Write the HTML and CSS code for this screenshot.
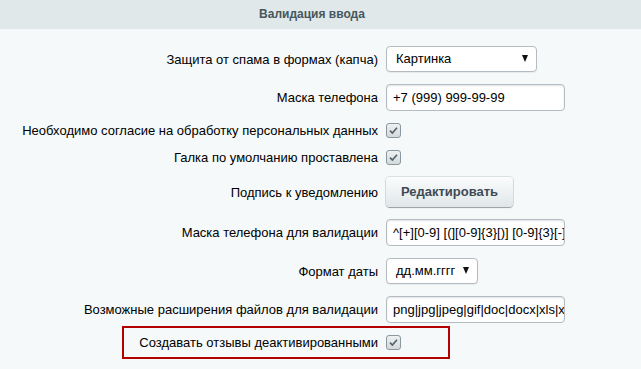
FILE: index.html
```html
<!DOCTYPE html>
<html lang="ru">
<head>
<meta charset="utf-8">
<link rel="stylesheet" href="styles.css">
</head>
<body>
<div class="heading">Валидация ввода</div>
<div class="form">
  <div class="row">
    <div class="label">Защита от спама в формах (капча)</div>
    <div class="ctrl"><div class="select sel-wide"><span>Картинка</span><span class="arrow"></span></div></div>
  </div>
  <div class="row">
    <div class="label">Маска телефона</div>
    <div class="ctrl"><div class="field">+7 (999) 999-99-99</div></div>
  </div>
  <div class="row">
    <div class="label">Необходимо согласие на обработку персональных данных</div>
    <div class="ctrl"><span class="check"><svg width="15" height="15" viewBox="0 0 15 15"><path d="M4 7.6 L6.4 10 L11 4.8" fill="none" stroke="#55606a" stroke-width="1.6"/></svg></span></div>
  </div>
  <div class="row">
    <div class="label">Галка по умолчанию проставлена</div>
    <div class="ctrl"><span class="check"><svg width="15" height="15" viewBox="0 0 15 15"><path d="M4 7.6 L6.4 10 L11 4.8" fill="none" stroke="#55606a" stroke-width="1.6"/></svg></span></div>
  </div>
  <div class="row">
    <div class="label">Подпись к уведомлению</div>
    <div class="ctrl"><span class="btn">Редактировать</span></div>
  </div>
  <div class="row">
    <div class="label">Маска телефона для валидации</div>
    <div class="ctrl"><div class="field">^[+][0-9] [(][0-9]{3}[)] [0-9]{3}[-][0-9]{2}[-][0-9]{2}$</div></div>
  </div>
  <div class="row">
    <div class="label">Формат даты</div>
    <div class="ctrl"><div class="select sel-date"><span>дд.мм.гггг</span><span class="arrow"></span></div></div>
  </div>
  <div class="row">
    <div class="label">Возможные расширения файлов для валидации</div>
    <div class="ctrl"><div class="field">png|jpg|jpeg|gif|doc|docx|xls|xlsx|txt|pdf|odt|rtf</div></div>
  </div>
  <div class="row marked">
    <div class="label">Создавать отзывы деактивированными</div>
    <div class="ctrl"><span class="check"><svg width="15" height="15" viewBox="0 0 15 15"><path d="M4 7.6 L6.4 10 L11 4.8" fill="none" stroke="#55606a" stroke-width="1.6"/></svg></span></div>
    <span class="highlight"></span>
  </div>
</div>
</body>
</html>
```
FILE: styles.css
```css
html, body {
  margin: 0;
  padding: 0;
}
body {
  background: #f5f9f9;
  font-family: Arial, "Liberation Sans", sans-serif;
  font-size: 13px;
  color: #000;
  width: 641px;
  height: 369px;
  overflow: hidden;
}
.heading {
  height: 29px;
  line-height: 28px;
  background: #e0e8ea;
  color: #46575d;
  font-weight: bold;
  font-size: 12px;
  text-align: center;
  padding-right: 17px;
}
.form {
  padding-top: 11px;
}
.row {
  display: grid;
  grid-template-columns: 378px 1fr;
  column-gap: 8px;
  align-items: center;
  padding: 6px 0;
  line-height: 15px;
}
.label {
  text-align: right;
  white-space: nowrap;
}
.ctrl {
  display: flex;
  align-items: center;
}
.field {
  box-sizing: border-box;
  width: 179px;
  height: 27px;
  line-height: 25px;
  padding: 0 6px;
  background: #fff;
  border: 1px solid #b4bcc1;
  border-radius: 4px;
  white-space: nowrap;
  overflow: hidden;
  box-shadow: inset 0 1px 2px rgba(160,170,175,0.35);
}
.select {
  box-sizing: border-box;
  height: 26px;
  line-height: 24px;
  padding: 0 8px 0 9px;
  background: #fff;
  border: 1px solid #b4bcc1;
  border-radius: 4px;
  display: flex;
  justify-content: space-between;
  align-items: center;
  box-shadow: 0 1px 1px rgba(0,0,0,0.06);
}
.sel-wide { width: 151px; }
.sel-date { width: 92px; }
.arrow {
  width: 0;
  height: 0;
  border-left: 3.5px solid transparent;
  border-right: 3.5px solid transparent;
  border-top: 7px solid #111;
  margin-top: -2px;
}
.check {
  display: block;
  width: 15px;
  height: 15px;
  box-sizing: border-box;
  border: 1px solid #8a979d;
  border-radius: 3px;
  background: linear-gradient(#eef1f2, #d3d9dc);
  position: relative;
  overflow: hidden;
}
.check svg {
  display: block;
  margin: -1px 0 0 -1px;
}
.btn {
  display: block;
  box-sizing: border-box;
  width: 127px;
  height: 30px;
  line-height: 30px;
  text-align: center;
  font-weight: bold;
  color: #3f4b54;
  border-radius: 4px;
  background: linear-gradient(#fbfcfc, #e0e7e9);
  box-shadow: 0 1px 1px rgba(0,0,0,0.3), 0 0 0 1px rgba(170,180,185,0.35);
}
.marked {
  position: relative;
}
.highlight {
  position: absolute;
  left: 122px;
  top: -3px;
  width: 328px;
  height: 33px;
  box-sizing: border-box;
  border: 2px solid #b30000;
  pointer-events: none;
}
```
